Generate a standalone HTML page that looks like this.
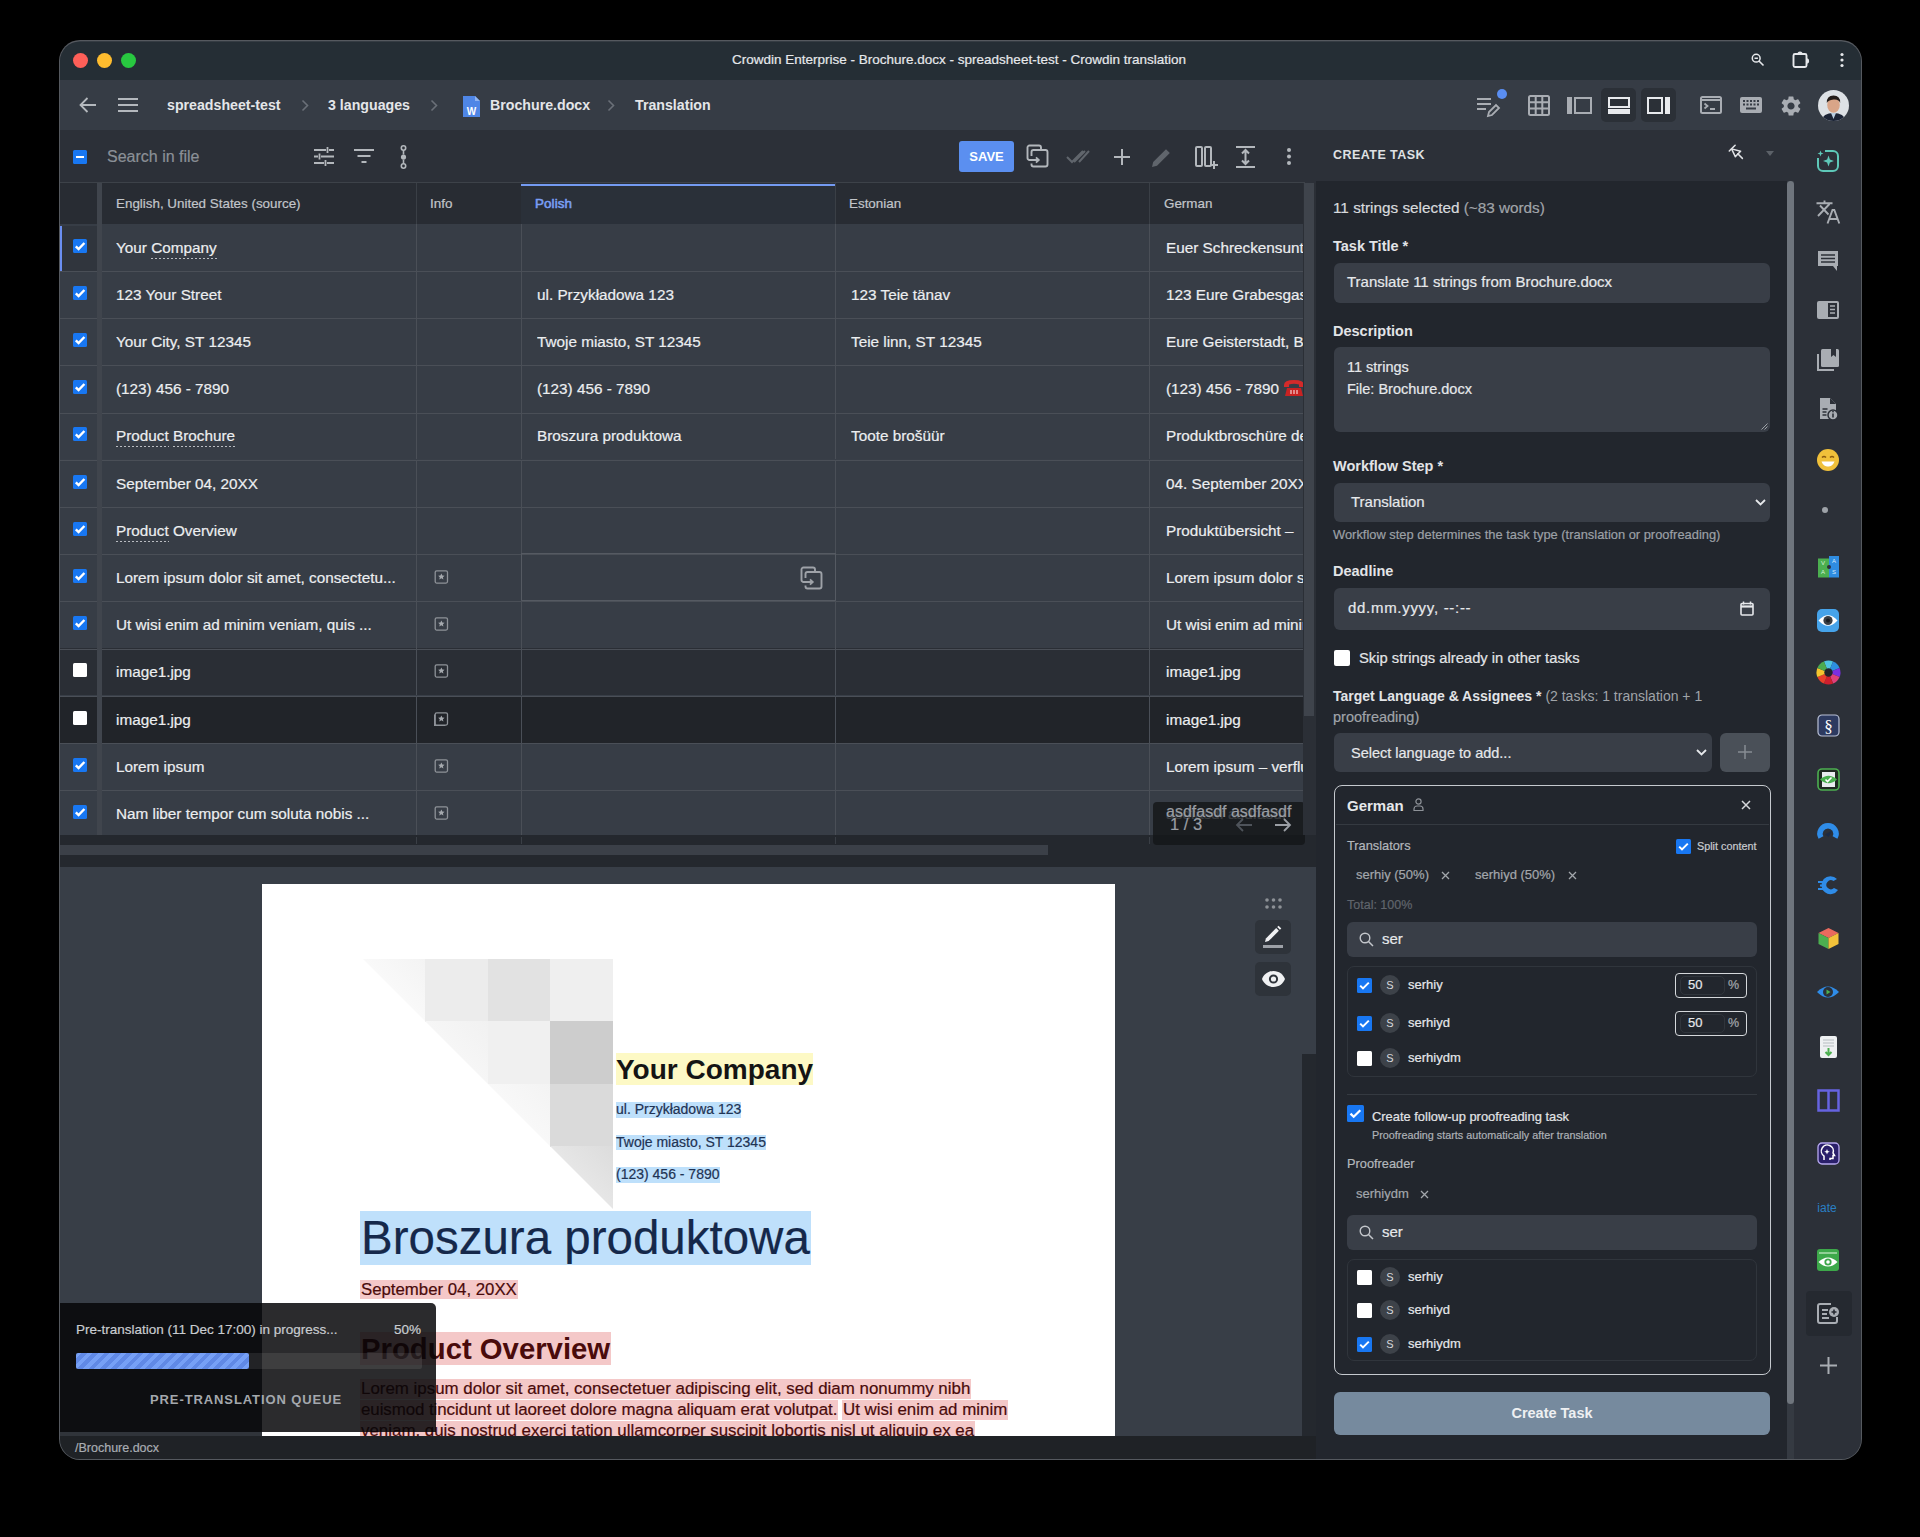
<!DOCTYPE html><html><head><meta charset="utf-8"><style>
*{box-sizing:border-box;margin:0;padding:0}
html,body{width:1920px;height:1537px;background:#000;overflow:hidden;font-family:"Liberation Sans",sans-serif}
.a{position:absolute}
.t{position:absolute;white-space:nowrap}
#frame{position:absolute;left:59px;top:40px;width:1803px;height:1420px;border-radius:21px;background:#55595f}
#win{position:absolute;left:0;top:0;width:1920px;height:1537px;clip-path:inset(41.5px 59px 78px 60px round 20px);background:#383e47}
.tl{position:absolute;width:15px;height:15px;border-radius:50%;top:53px}
.crumb{position:absolute;color:#e4e6e9;font-size:14.2px;font-weight:bold;top:96px;white-space:nowrap;line-height:18px}
.th{position:absolute;top:183px;height:41px;line-height:41px;font-size:13.4px;color:#c2c5ca;white-space:nowrap}
.row{position:absolute;left:60px;width:1245px;height:47.2px;background:#373d46}
.ln{position:absolute;left:0;bottom:-1px;width:1245px;height:1px;background:#4a4f57}
.cell{position:absolute;top:1px;height:46px;line-height:46px;font-size:15.3px;color:#eceef0;white-space:nowrap;overflow:hidden}
.vl{position:absolute;top:0;width:1px;height:47.2px;background:#4a4f57}
.cb{position:absolute;width:14px;height:14px;border-radius:1.5px;background:#1877f2}
.cb.off{background:#fff}
.cb svg{position:absolute;left:0;top:0}
.dash{background-image:linear-gradient(to right,#b9bcc1 55%,transparent 55%);background-size:4px 1px;background-repeat:repeat-x;background-position:0 100%;padding-bottom:3px}
.ico{position:absolute;overflow:visible}
.cell,.th,.t{-webkit-text-stroke:0.2px currentColor}
.t[style*="bold"]{-webkit-text-stroke:0}
</style></head><body>
<div id="frame"></div><div id="win">
<div class="a" style="left:60px;top:40px;width:1802px;height:40px;background:#252e35"></div>
<div class="tl" style="left:73px;background:#fe5f58"></div>
<div class="tl" style="left:97px;background:#febc2e"></div>
<div class="tl" style="left:121px;background:#28c840"></div>
<div class="t" style="left:732px;top:52px;color:#e6e8eb;font-size:13.5px;line-height:16px">Crowdin Enterprise - Brochure.docx - spreadsheet-test - Crowdin translation</div>
<svg class="ico" style="left:1751px;top:53px" width="14" height="14" viewBox="0 0 14 14"><circle cx="5.2" cy="5.2" r="3.9" fill="none" stroke="#e6e8eb" stroke-width="1.5"/><path d="M3.5 5.2h3.4M8 8l4.5 4.5" stroke="#e6e8eb" stroke-width="1.6"/></svg>
<svg class="ico" style="left:1791px;top:50px" width="20" height="20" viewBox="0 0 20 20"><rect x="2.5" y="4" width="13" height="13" rx="1.5" fill="none" stroke="#e6e8eb" stroke-width="1.9"/><path d="M6.4 4a2.6 2.6 0 0 1 5.2 0z" fill="#e6e8eb"/><path d="M15.5 8.3a2.6 2.6 0 0 1 0 5.2z" fill="#e6e8eb"/></svg>
<svg class="ico" style="left:1839px;top:52px" width="6" height="16" viewBox="0 0 6 16"><circle cx="3" cy="2.5" r="1.6" fill="#e6e8eb"/><circle cx="3" cy="8" r="1.6" fill="#e6e8eb"/><circle cx="3" cy="13.5" r="1.6" fill="#e6e8eb"/></svg>
<div class="a" style="left:60px;top:80px;width:1802px;height:50px;background:#363c45"></div>
<svg class="ico" style="left:78px;top:96px" width="19" height="18" viewBox="0 0 19 18"><path d="M18 9H3M9.5 2L2.5 9l7 7" fill="none" stroke="#b4b8bd" stroke-width="1.8"/></svg>
<svg class="ico" style="left:118px;top:98px" width="20" height="14" viewBox="0 0 20 14"><path d="M0 1h20M0 7h20M0 13h20" stroke="#b4b8bd" stroke-width="1.8"/></svg>
<div class="crumb" style="left:167px">spreadsheet-test</div>
<svg class="ico" style="left:301px;top:99px" width="9" height="13" viewBox="0 0 9 13"><path d="M1.5 1.5l5 5-5 5" fill="none" stroke="#6a7078" stroke-width="1.6"/></svg>
<div class="crumb" style="left:328px">3 languages</div>
<svg class="ico" style="left:430px;top:99px" width="9" height="13" viewBox="0 0 9 13"><path d="M1.5 1.5l5 5-5 5" fill="none" stroke="#6a7078" stroke-width="1.6"/></svg>
<svg class="ico" style="left:462px;top:95px" width="19" height="23" viewBox="0 0 19 23"><path d="M1 1h12l5 5v16H1z" fill="#4f86e6"/><path d="M13 1v5h5" fill="#8fb3f0"/><text x="9.5" y="20" font-family="Liberation Sans" font-weight="bold" font-size="10" fill="#fff" text-anchor="middle">W</text></svg>
<div class="crumb" style="left:490px">Brochure.docx</div>
<svg class="ico" style="left:607px;top:99px" width="9" height="13" viewBox="0 0 9 13"><path d="M1.5 1.5l5 5-5 5" fill="none" stroke="#6a7078" stroke-width="1.6"/></svg>
<div class="crumb" style="left:635px">Translation</div>
<svg class="ico" style="left:1476px;top:96px" width="26" height="22" viewBox="0 0 26 22"><path d="M1 3h14M1 8h14M1 13h9" stroke="#a9adb3" stroke-width="2"/><path d="M12 20l1-4 7-7 3 3-7 7z" fill="none" stroke="#a9adb3" stroke-width="1.8"/></svg>
<div class="a" style="left:1497px;top:89px;width:10px;height:10px;border-radius:50%;background:#5a8ef2"></div>
<svg class="ico" style="left:1528px;top:95px" width="22" height="21" viewBox="0 0 22 21"><rect x="1" y="1" width="20" height="19" rx="1.5" fill="none" stroke="#a9adb3" stroke-width="2"/><path d="M7.7 1v19M14.3 1v19M1 7.3h20M1 13.6h20" stroke="#a9adb3" stroke-width="2"/></svg>
<svg class="ico" style="left:1567px;top:97px" width="25" height="17" viewBox="0 0 25 17"><rect x="0" y="0" width="5" height="17" fill="#a9adb3"/><rect x="8" y="1" width="16" height="15" fill="none" stroke="#a9adb3" stroke-width="2"/></svg>
<div class="a" style="left:1601px;top:88px;width:35px;height:34px;border-radius:5px;background:#2b3037"></div>
<div class="a" style="left:1641px;top:88px;width:35px;height:34px;border-radius:5px;background:#2b3037"></div>
<svg class="ico" style="left:1608px;top:97px" width="22" height="17" viewBox="0 0 22 17"><rect x="1" y="1" width="20" height="9" fill="none" stroke="#e8eaed" stroke-width="2"/><rect x="0" y="12" width="22" height="5" fill="#e8eaed"/></svg>
<svg class="ico" style="left:1647px;top:97px" width="23" height="17" viewBox="0 0 23 17"><rect x="1" y="1" width="14" height="15" fill="none" stroke="#e8eaed" stroke-width="2"/><rect x="18" y="0" width="5" height="17" fill="#e8eaed"/></svg>
<svg class="ico" style="left:1700px;top:96px" width="22" height="18" viewBox="0 0 22 18"><rect x="1" y="1" width="20" height="16" rx="1.5" fill="none" stroke="#a9adb3" stroke-width="2"/><path d="M1 4h20" stroke="#a9adb3" stroke-width="2"/><path d="M4.5 7.5l3 2.5-3 2.5M10 13h5" fill="none" stroke="#a9adb3" stroke-width="1.8"/></svg>
<svg class="ico" style="left:1740px;top:97px" width="22" height="16" viewBox="0 0 22 16"><rect x="0" y="0" width="22" height="16" rx="2" fill="#a9adb3"/><g fill="#363c45"><rect x="3" y="3" width="2" height="2"/><rect x="6.5" y="3" width="2" height="2"/><rect x="10" y="3" width="2" height="2"/><rect x="13.5" y="3" width="2" height="2"/><rect x="17" y="3" width="2" height="2"/><rect x="3" y="6.5" width="2" height="2"/><rect x="6.5" y="6.5" width="2" height="2"/><rect x="10" y="6.5" width="2" height="2"/><rect x="13.5" y="6.5" width="2" height="2"/><rect x="17" y="6.5" width="2" height="2"/><rect x="6" y="10.5" width="10" height="2"/></g></svg>
<svg class="ico" style="left:1778.5px;top:93.5px" width="24" height="24" viewBox="0 0 24 24"><path fill="#a9adb3" d="M19.14 12.94c.04-.3.06-.61.06-.94 0-.32-.02-.64-.07-.94l2.03-1.58a.49.49 0 0 0 .12-.61l-1.92-3.32a.49.49 0 0 0-.59-.22l-2.39.96c-.5-.38-1.03-.7-1.62-.94l-.36-2.54a.48.48 0 0 0-.48-.41h-3.84c-.24 0-.43.17-.47.41l-.36 2.54c-.59.24-1.13.57-1.62.94l-2.39-.96a.48.48 0 0 0-.59.22L2.74 8.87c-.12.21-.08.47.12.61l2.03 1.58c-.05.3-.09.63-.09.94s.2.64.07.94l-2.03 1.58a.49.49 0 0 0-.12.61l1.92 3.32c.12.22.37.29.59.22l2.39-.96c.5.38 1.03.7 1.62.94l.36 2.54c.05.24.24.41.48.41h3.84c.24 0 .44-.17.47-.41l.36-2.54c.59-.24 1.13-.56 1.62-.94l2.39.96c.22.08.47 0 .59-.22l1.92-3.32c.12-.22.07-.47-.12-.61l-2.01-1.58zM12 15.6c-1.98 0-3.6-1.62-3.6-3.6s1.62-3.6 3.6-3.6 3.6 1.62 3.6 3.6-1.62 3.6-3.6 3.6z"/></svg>
<svg class="ico" style="left:1818px;top:90px" width="31" height="31" viewBox="0 0 31 31"><defs><clipPath id="avc"><circle cx="15.5" cy="15.5" r="15.5"/></clipPath></defs><g clip-path="url(#avc)"><rect width="31" height="31" fill="#dde1e5"/><path d="M3 31Q5 23 15.5 23T28 31z" fill="#1c2436"/><path d="M13 23l2.5 6 2.5-6z" fill="#b9cde0"/><ellipse cx="15.5" cy="15" rx="6.3" ry="7.8" fill="#d9a588"/><path d="M8.8 13Q8.5 5.5 15.5 5.5T22.2 13Q21 9 15.5 9.5T8.8 13z" fill="#231c19"/></g></svg>
<div class="a" style="left:60px;top:130px;width:1256px;height:53px;background:#2c3038"></div>
<div class="a" style="left:60px;top:182px;width:1245px;height:1px;background:#3d4249"></div>
<div class="cb" style="left:73px;top:150px;width:14px;height:14px"><div class="a" style="left:3px;top:6px;width:8px;height:2px;background:#fff"></div></div>
<div class="t" style="left:107px;top:147px;font-size:16px;line-height:19px;color:#8b9097">Search in file</div>
<svg class="ico" style="left:314px;top:147px" width="20" height="19" viewBox="0 0 20 19"><path d="M0 3h12M15 3h5M0 9.5h4M7 9.5h13M0 16h10M13 16h7M13.5 0v6M5.5 6.5v6M11.5 13v6" stroke="#b3b7bc" stroke-width="1.8"/></svg>
<svg class="ico" style="left:354px;top:149px" width="20" height="14" viewBox="0 0 20 14"><path d="M0 1h20M3.5 7h13M7.5 13h5" stroke="#b3b7bc" stroke-width="2"/></svg>
<svg class="ico" style="left:398px;top:145px" width="11" height="24" viewBox="0 0 11 24"><circle cx="5.5" cy="3" r="2.2" fill="none" stroke="#b3b7bc" stroke-width="1.6"/><circle cx="5.5" cy="12" r="2.6" fill="#b3b7bc"/><circle cx="5.5" cy="21" r="2.2" fill="none" stroke="#b3b7bc" stroke-width="1.6"/><path d="M5.5 5v4.5M5.5 14.5V19" stroke="#b3b7bc" stroke-width="1.6"/></svg>
<div class="a" style="left:959px;top:141px;width:55px;height:31px;border-radius:3px;background:#5b8ff0;color:#fff;font-size:13px;font-weight:bold;text-align:center;line-height:31px">SAVE</div>
<svg class="ico" style="left:1026px;top:144px" width="23" height="24" viewBox="0 0 23 24"><path d="M5 16H3.5A2 2 0 0 1 1.5 14V3.5A2 2 0 0 1 3.5 1.5H13A2 2 0 0 1 15 3.5V5.5" fill="none" stroke="#b3b7bc" stroke-width="1.9"/><path d="M5.5 12V8A2 2 0 0 1 7.5 6H19.5A2 2 0 0 1 21.5 8V20.5A2 2 0 0 1 19.5 22.5H7.5A2 2 0 0 1 5.5 20.5V19.5" fill="none" stroke="#b3b7bc" stroke-width="1.9"/><path d="M3 16h9.5M10 13.3l2.8 2.7-2.8 2.7" fill="none" stroke="#b3b7bc" stroke-width="1.8"/></svg>
<svg class="ico" style="left:1066px;top:150px" width="24" height="14" viewBox="0 0 24 14"><path d="M1 7l5 5L17 1M8 12L19 1M13 12l10-11" fill="none" stroke="#60656c" stroke-width="2"/></svg>
<svg class="ico" style="left:1114px;top:149px" width="16" height="16" viewBox="0 0 16 16"><path d="M8 0v16M0 8h16" stroke="#b3b7bc" stroke-width="2"/></svg>
<svg class="ico" style="left:1151px;top:147px" width="21" height="21" viewBox="0 0 21 21"><path d="M1 20l1.2-5L15 2.2l3.8 3.8L6 18.8z" fill="#60656c"/></svg>
<svg class="ico" style="left:1195px;top:146px" width="23" height="23" viewBox="0 0 23 23"><rect x="1" y="1" width="6" height="19" rx="1" fill="none" stroke="#b3b7bc" stroke-width="2"/><rect x="10" y="1" width="6" height="19" rx="1" fill="none" stroke="#b3b7bc" stroke-width="2"/><path d="M19 15v8M15 19h8" stroke="#b3b7bc" stroke-width="2"/></svg>
<svg class="ico" style="left:1236px;top:146px" width="19" height="22" viewBox="0 0 19 22"><path d="M0 1h19M0 21h19M9.5 4v14M6 7.5l3.5-3.5 3.5 3.5M6 14.5l3.5 3.5 3.5-3.5" fill="none" stroke="#b3b7bc" stroke-width="2"/></svg>
<svg class="ico" style="left:1286px;top:147px" width="6" height="19" viewBox="0 0 6 19"><circle cx="3" cy="3" r="2" fill="#b3b7bc"/><circle cx="3" cy="9.5" r="2" fill="#b3b7bc"/><circle cx="3" cy="16" r="2" fill="#b3b7bc"/></svg>
<div class="a" style="left:60px;top:183px;width:1245px;height:41px;background:#282c33"></div>
<div class="a" style="left:521px;top:183px;width:314px;height:41px;background:#2a3039"></div>
<div class="a" style="left:521px;top:183.5px;width:314px;height:2.5px;background:#749af1"></div>
<div class="a" style="left:97px;top:183px;width:5px;height:660px;background:#40454d"></div>
<div class="a" style="left:416px;top:183px;width:1px;height:41px;background:#3a3f46"></div>
<div class="a" style="left:835px;top:183px;width:1px;height:41px;background:#3a3f46"></div>
<div class="a" style="left:1149px;top:183px;width:1px;height:41px;background:#3a3f46"></div>
<div class="th" style="left:116px">English, United States (source)</div>
<div class="th" style="left:430px">Info</div>
<div class="th" style="left:535px;color:#7a9ff5;-webkit-text-stroke:0.55px #7a9ff5;letter-spacing:0.1px">Polish</div>
<div class="th" style="left:849px">Estonian</div>
<div class="th" style="left:1164px">German</div>
<div class="row" style="top:224px;background:#373d46">
<div class="a" style="left:2px;top:2px;width:35px;height:45px;background:#30353d"></div>
<div class="a" style="left:0;top:2px;width:2px;height:45px;background:#6b8ff2"></div>
<div class="cb" style="left:13px;top:15px"><svg width="14" height="14" viewBox="0 0 14 14"><path d="M2.8 7.3l2.8 2.8L11.4 4" fill="none" stroke="#fff" stroke-width="2.4"/></svg></div>
<div class="cell" style="left:56px;width:300px">Your <span class="dash">Company</span></div>
<div class="cell" style="left:477px;width:300px"></div>
<div class="cell" style="left:791px;width:300px"></div>
<div class="cell" style="left:1106px;width:138px">Euer Schreckensunternehmen</div>
<div class="vl" style="left:356px"></div>
<div class="vl" style="left:461px"></div>
<div class="vl" style="left:775px"></div>
<div class="vl" style="left:1089px"></div>
</div>
<div class="row" style="top:271px;background:#373d46">
<div class="cb" style="left:13px;top:15px"><svg width="14" height="14" viewBox="0 0 14 14"><path d="M2.8 7.3l2.8 2.8L11.4 4" fill="none" stroke="#fff" stroke-width="2.4"/></svg></div>
<div class="cell" style="left:56px;width:300px">123 Your Street</div>
<div class="cell" style="left:477px;width:300px">ul. Przykładowa 123</div>
<div class="cell" style="left:791px;width:300px">123 Teie tänav</div>
<div class="cell" style="left:1106px;width:138px">123 Eure Grabesgasse</div>
<div class="vl" style="left:356px"></div>
<div class="vl" style="left:461px"></div>
<div class="vl" style="left:775px"></div>
<div class="vl" style="left:1089px"></div>
</div>
<div class="row" style="top:318px;background:#373d46">
<div class="cb" style="left:13px;top:15px"><svg width="14" height="14" viewBox="0 0 14 14"><path d="M2.8 7.3l2.8 2.8L11.4 4" fill="none" stroke="#fff" stroke-width="2.4"/></svg></div>
<div class="cell" style="left:56px;width:300px">Your City, ST 12345</div>
<div class="cell" style="left:477px;width:300px">Twoje miasto, ST 12345</div>
<div class="cell" style="left:791px;width:300px">Teie linn, ST 12345</div>
<div class="cell" style="left:1106px;width:138px">Eure Geisterstadt, BU 66666</div>
<div class="vl" style="left:356px"></div>
<div class="vl" style="left:461px"></div>
<div class="vl" style="left:775px"></div>
<div class="vl" style="left:1089px"></div>
</div>
<div class="row" style="top:365px;background:#373d46">
<div class="cb" style="left:13px;top:15px"><svg width="14" height="14" viewBox="0 0 14 14"><path d="M2.8 7.3l2.8 2.8L11.4 4" fill="none" stroke="#fff" stroke-width="2.4"/></svg></div>
<div class="cell" style="left:56px;width:300px">(123) 456 - 7890</div>
<div class="cell" style="left:477px;width:300px">(123) 456 - 7890</div>
<div class="cell" style="left:791px;width:300px"></div>
<div class="cell" style="left:1106px;width:138px">(123) 456 - 7890 <svg width="22" height="19" viewBox="0 0 22 19" style="vertical-align:-3px"><path d="M1 7Q1 2 11 2T21 7L21 9 16 9 16 6.5Q11 5 6 6.5L6 9 1 9z" fill="#d42a2a"/><path d="M4 10h14l2 8H2z" fill="#c92222"/><path d="M8 12v4M11 12v4M14 12v4" stroke="#f6d0d0" stroke-width="1.2"/></svg></div>
<div class="vl" style="left:356px"></div>
<div class="vl" style="left:461px"></div>
<div class="vl" style="left:775px"></div>
<div class="vl" style="left:1089px"></div>
</div>
<div class="row" style="top:412px;background:#373d46">
<div class="cb" style="left:13px;top:15px"><svg width="14" height="14" viewBox="0 0 14 14"><path d="M2.8 7.3l2.8 2.8L11.4 4" fill="none" stroke="#fff" stroke-width="2.4"/></svg></div>
<div class="cell" style="left:56px;width:300px"><span class="dash">Product</span> <span class="dash">Brochure</span></div>
<div class="cell" style="left:477px;width:300px">Broszura produktowa</div>
<div class="cell" style="left:791px;width:300px">Toote brošüür</div>
<div class="cell" style="left:1106px;width:138px">Produktbroschüre des Grauens</div>
<div class="vl" style="left:356px"></div>
<div class="vl" style="left:461px"></div>
<div class="vl" style="left:775px"></div>
<div class="vl" style="left:1089px"></div>
</div>
<div class="row" style="top:460px;background:#373d46">
<div class="cb" style="left:13px;top:15px"><svg width="14" height="14" viewBox="0 0 14 14"><path d="M2.8 7.3l2.8 2.8L11.4 4" fill="none" stroke="#fff" stroke-width="2.4"/></svg></div>
<div class="cell" style="left:56px;width:300px">September 04, 20XX</div>
<div class="cell" style="left:477px;width:300px"></div>
<div class="cell" style="left:791px;width:300px"></div>
<div class="cell" style="left:1106px;width:138px">04. September 20XX</div>
<div class="vl" style="left:356px"></div>
<div class="vl" style="left:461px"></div>
<div class="vl" style="left:775px"></div>
<div class="vl" style="left:1089px"></div>
</div>
<div class="row" style="top:507px;background:#373d46">
<div class="cb" style="left:13px;top:15px"><svg width="14" height="14" viewBox="0 0 14 14"><path d="M2.8 7.3l2.8 2.8L11.4 4" fill="none" stroke="#fff" stroke-width="2.4"/></svg></div>
<div class="cell" style="left:56px;width:300px"><span class="dash">Product</span> Overview</div>
<div class="cell" style="left:477px;width:300px"></div>
<div class="cell" style="left:791px;width:300px"></div>
<div class="cell" style="left:1106px;width:138px">Produktübersicht –</div>
<div class="vl" style="left:356px"></div>
<div class="vl" style="left:461px"></div>
<div class="vl" style="left:775px"></div>
<div class="vl" style="left:1089px"></div>
</div>
<div class="row" style="top:554px;background:#373d46">
<div class="cb" style="left:13px;top:15px"><svg width="14" height="14" viewBox="0 0 14 14"><path d="M2.8 7.3l2.8 2.8L11.4 4" fill="none" stroke="#fff" stroke-width="2.4"/></svg></div>
<div class="cell" style="left:56px;width:300px">Lorem ipsum dolor sit amet, consectetu...</div>
<div class="cell" style="left:477px;width:300px"></div>
<div class="cell" style="left:791px;width:300px"></div>
<div class="cell" style="left:1106px;width:138px">Lorem ipsum dolor sit amet</div>
<div class="vl" style="left:356px"></div>
<div class="vl" style="left:461px"></div>
<div class="vl" style="left:775px"></div>
<div class="vl" style="left:1089px"></div>
</div>
<svg class="ico" style="left:434px;top:569.9px" width="14" height="14" viewBox="0 0 14 14"><rect x="1.2" y="0.8" width="12.3" height="12.3" rx="1.5" fill="none" stroke="#8e9298" stroke-width="1.3"/><path d="M7.35 3.4l1 2.1 2.2.25-1.65 1.5.5 2.2-2.05-1.15-2.05 1.15.5-2.2L4.15 5.75l2.2-.25z" fill="#a5a9ae"/></svg>
<div class="row" style="top:601px;background:#373d46">
<div class="cb" style="left:13px;top:15px"><svg width="14" height="14" viewBox="0 0 14 14"><path d="M2.8 7.3l2.8 2.8L11.4 4" fill="none" stroke="#fff" stroke-width="2.4"/></svg></div>
<div class="cell" style="left:56px;width:300px">Ut wisi enim ad minim veniam, quis ...</div>
<div class="cell" style="left:477px;width:300px"></div>
<div class="cell" style="left:791px;width:300px"></div>
<div class="cell" style="left:1106px;width:138px">Ut wisi enim ad minim veniam</div>
<div class="vl" style="left:356px"></div>
<div class="vl" style="left:461px"></div>
<div class="vl" style="left:775px"></div>
<div class="vl" style="left:1089px"></div>
</div>
<svg class="ico" style="left:434px;top:617.1px" width="14" height="14" viewBox="0 0 14 14"><rect x="1.2" y="0.8" width="12.3" height="12.3" rx="1.5" fill="none" stroke="#8e9298" stroke-width="1.3"/><path d="M7.35 3.4l1 2.1 2.2.25-1.65 1.5.5 2.2-2.05-1.15-2.05 1.15.5-2.2L4.15 5.75l2.2-.25z" fill="#a5a9ae"/></svg>
<div class="row" style="top:648px;background:#2a2e35">
<div class="cb off" style="left:13px;top:15px"></div>
<div class="cell" style="left:56px;width:300px">image1.jpg</div>
<div class="cell" style="left:477px;width:300px"></div>
<div class="cell" style="left:791px;width:300px"></div>
<div class="cell" style="left:1106px;width:138px">image1.jpg</div>
<div class="vl" style="left:356px"></div>
<div class="vl" style="left:461px"></div>
<div class="vl" style="left:775px"></div>
<div class="vl" style="left:1089px"></div>
</div>
<svg class="ico" style="left:434px;top:664.3px" width="14" height="14" viewBox="0 0 14 14"><rect x="1.2" y="0.8" width="12.3" height="12.3" rx="1.5" fill="none" stroke="#8e9298" stroke-width="1.3"/><path d="M7.35 3.4l1 2.1 2.2.25-1.65 1.5.5 2.2-2.05-1.15-2.05 1.15.5-2.2L4.15 5.75l2.2-.25z" fill="#a5a9ae"/></svg>
<div class="row" style="top:696px;background:#212429">
<div class="cb off" style="left:13px;top:15px"></div>
<div class="cell" style="left:56px;width:300px">image1.jpg</div>
<div class="cell" style="left:477px;width:300px"></div>
<div class="cell" style="left:791px;width:300px"></div>
<div class="cell" style="left:1106px;width:138px">image1.jpg</div>
<div class="vl" style="left:356px"></div>
<div class="vl" style="left:461px"></div>
<div class="vl" style="left:775px"></div>
<div class="vl" style="left:1089px"></div>
</div>
<svg class="ico" style="left:434px;top:711.5px" width="14" height="14" viewBox="0 0 14 14"><path d="M0.6 2.5v11h10.5" fill="none" stroke="#8e9298" stroke-width="1.2"/><rect x="1.2" y="0.8" width="12.3" height="12.3" rx="1.5" fill="none" stroke="#8e9298" stroke-width="1.3"/><path d="M7.35 3.4l1 2.1 2.2.25-1.65 1.5.5 2.2-2.05-1.15-2.05 1.15.5-2.2L4.15 5.75l2.2-.25z" fill="#a5a9ae"/></svg>
<div class="row" style="top:743px;background:#373d46">
<div class="cb" style="left:13px;top:15px"><svg width="14" height="14" viewBox="0 0 14 14"><path d="M2.8 7.3l2.8 2.8L11.4 4" fill="none" stroke="#fff" stroke-width="2.4"/></svg></div>
<div class="cell" style="left:56px;width:300px">Lorem ipsum</div>
<div class="cell" style="left:477px;width:300px"></div>
<div class="cell" style="left:791px;width:300px"></div>
<div class="cell" style="left:1106px;width:138px">Lorem ipsum – verflucht</div>
<div class="vl" style="left:356px"></div>
<div class="vl" style="left:461px"></div>
<div class="vl" style="left:775px"></div>
<div class="vl" style="left:1089px"></div>
</div>
<svg class="ico" style="left:434px;top:758.7px" width="14" height="14" viewBox="0 0 14 14"><rect x="1.2" y="0.8" width="12.3" height="12.3" rx="1.5" fill="none" stroke="#8e9298" stroke-width="1.3"/><path d="M7.35 3.4l1 2.1 2.2.25-1.65 1.5.5 2.2-2.05-1.15-2.05 1.15.5-2.2L4.15 5.75l2.2-.25z" fill="#a5a9ae"/></svg>
<div class="row" style="top:790px;background:#373d46">
<div class="cb" style="left:13px;top:15px"><svg width="14" height="14" viewBox="0 0 14 14"><path d="M2.8 7.3l2.8 2.8L11.4 4" fill="none" stroke="#fff" stroke-width="2.4"/></svg></div>
<div class="cell" style="left:56px;width:300px">Nam liber tempor cum soluta nobis ...</div>
<div class="cell" style="left:477px;width:300px"></div>
<div class="cell" style="left:791px;width:300px"></div>
<div class="cell" style="left:1106px;width:138px">asdfasdf asdfasdf</div>
<div class="vl" style="left:356px"></div>
<div class="vl" style="left:461px"></div>
<div class="vl" style="left:775px"></div>
<div class="vl" style="left:1089px"></div>
</div>
<svg class="ico" style="left:434px;top:805.9px" width="14" height="14" viewBox="0 0 14 14"><rect x="1.2" y="0.8" width="12.3" height="12.3" rx="1.5" fill="none" stroke="#8e9298" stroke-width="1.3"/><path d="M7.35 3.4l1 2.1 2.2.25-1.65 1.5.5 2.2-2.05-1.15-2.05 1.15.5-2.2L4.15 5.75l2.2-.25z" fill="#a5a9ae"/></svg>
<div class="a" style="left:60px;top:271.0px;width:1244px;height:1px;background:#4a4f57"></div>
<div class="a" style="left:60px;top:318.2px;width:1244px;height:1px;background:#4a4f57"></div>
<div class="a" style="left:60px;top:365.4px;width:1244px;height:1px;background:#4a4f57"></div>
<div class="a" style="left:60px;top:412.6px;width:1244px;height:1px;background:#4a4f57"></div>
<div class="a" style="left:60px;top:459.8px;width:1244px;height:1px;background:#4a4f57"></div>
<div class="a" style="left:60px;top:507.0px;width:1244px;height:1px;background:#4a4f57"></div>
<div class="a" style="left:60px;top:554.2px;width:1244px;height:1px;background:#4a4f57"></div>
<div class="a" style="left:60px;top:601.4px;width:1244px;height:1px;background:#4a4f57"></div>
<div class="a" style="left:60px;top:648.6px;width:1244px;height:1px;background:#4a4f57"></div>
<div class="a" style="left:60px;top:695.8px;width:1244px;height:1px;background:#4a4f57"></div>
<div class="a" style="left:60px;top:743.0px;width:1244px;height:1px;background:#4a4f57"></div>
<div class="a" style="left:60px;top:790.2px;width:1244px;height:1px;background:#4a4f57"></div>
<div class="a" style="left:60px;top:837.4px;width:1244px;height:1px;background:#4a4f57"></div>
<div class="a" style="left:97px;top:183px;width:5px;height:660px;background:#40454d"></div>
<div class="a" style="left:60px;top:835px;width:1256px;height:32px;background:#24282e"></div>
<div class="a" style="left:60px;top:845px;width:988px;height:10px;background:#3b4048"></div>
<div class="a" style="left:416px;top:837px;width:1px;height:7px;background:#3a3f46"></div>
<div class="a" style="left:521px;top:837px;width:1px;height:7px;background:#3a3f46"></div>
<div class="a" style="left:835px;top:837px;width:1px;height:7px;background:#3a3f46"></div>
<div class="a" style="left:1149px;top:837px;width:1px;height:7px;background:#3a3f46"></div>
<div class="a" style="left:60px;top:867px;width:1256px;height:570px;background:#383e47"></div>
<div class="a" style="left:1302px;top:1054px;width:14px;height:383px;background:#24282e"></div>
<div class="a" style="left:262px;top:884px;width:853px;height:552px;background:#fff;overflow:hidden">
<svg class="a" style="left:100.5px;top:74.5px" width="63" height="63" viewBox="0 0 63 63"><defs><linearGradient id="g362958" x1="0" y1="1" x2="1" y2="0"><stop offset="0.5" stop-color="#f9f9f9"/><stop offset="1" stop-color="#f3f3f3"/></linearGradient></defs><path d="M0 0H63V63z" fill="url(#g362958)"/></svg>
<div class="a" style="left:163.0px;top:74.5px;width:63px;height:63px;background:#ececec"></div>
<div class="a" style="left:225.5px;top:74.5px;width:63px;height:63px;background:#e2e2e2"></div>
<div class="a" style="left:288.0px;top:74.5px;width:63px;height:63px;background:#efefef"></div>
<svg class="a" style="left:163.0px;top:137.0px" width="63" height="63" viewBox="0 0 63 63"><defs><linearGradient id="g4251021" x1="0" y1="1" x2="1" y2="0"><stop offset="0.5" stop-color="#f6f6f6"/><stop offset="1" stop-color="#f1f1f1"/></linearGradient></defs><path d="M0 0H63V63z" fill="url(#g4251021)"/></svg>
<div class="a" style="left:225.5px;top:137.0px;width:63px;height:63px;background:#f0f0f0"></div>
<div class="a" style="left:288.0px;top:137.0px;width:63px;height:63px;background:#cdcdcd"></div>
<svg class="a" style="left:225.5px;top:199.5px" width="63" height="63" viewBox="0 0 63 63"><defs><linearGradient id="g4871083" x1="0" y1="1" x2="1" y2="0"><stop offset="0.5" stop-color="#f8f8f8"/><stop offset="1" stop-color="#f3f3f3"/></linearGradient></defs><path d="M0 0H63V63z" fill="url(#g4871083)"/></svg>
<div class="a" style="left:288.0px;top:199.5px;width:63px;height:63px;background:#dadada"></div>
<svg class="a" style="left:288.0px;top:262.0px" width="63" height="63" viewBox="0 0 63 63"><defs><linearGradient id="g5501146" x1="0" y1="1" x2="1" y2="0"><stop offset="0.5" stop-color="#e6e6e6"/><stop offset="1" stop-color="#dcdcdc"/></linearGradient></defs><path d="M0 0H63V63z" fill="url(#g5501146)"/></svg>
<div class="t" style="left:354px;top:168.5999999999999px;height:32.7px;line-height:33px;padding:0;background:#fdf9c5;color:#141414;font-size:28px;font-weight:bold">Your Company</div>
<div class="t" style="left:354px;top:218.29999999999995px;height:15.4px;line-height:15.5px;padding:0;background:#bee0fb;color:#1e3354;font-size:14px">ul. Przykładowa 123</div>
<div class="t" style="left:354px;top:250.5999999999999px;height:15.4px;line-height:15.5px;padding:0;background:#bee0fb;color:#1e3354;font-size:14px">Twoje miasto, ST 12345</div>
<div class="t" style="left:354px;top:283.20000000000005px;height:15.4px;line-height:15.5px;padding:0;background:#bee0fb;color:#1e3354;font-size:14px">(123) 456 - 7890</div>
<div class="t" style="left:98px;top:327px;height:54px;line-height:54px;padding:0 1px;background:#bfe0fb;color:#15284a;font-size:47.5px">Broszura produktowa</div>
<div class="t" style="left:98px;top:396px;height:19px;line-height:19px;padding:0 1px;background:#f4c8c8;color:#4a0b0b;font-size:16.8px">September 04, 20XX</div>
<div class="t" style="left:98px;top:448px;height:33px;line-height:33px;padding:0 1px;background:#f4c8c8;color:#4a0b0b;font-size:29.3px;font-weight:bold">Product Overview</div>
<div class="t" style="left:98px;top:495px;background:#f4c8c8;color:#4a0b0b;font-size:16.9px;height:20px;line-height:20px;padding:0 1px">Lorem ipsum dolor sit amet, consectetuer adipiscing elit, sed diam nonummy nibh</div>
<div class="t" style="left:98px;top:516px;background:#f4c8c8;color:#4a0b0b;font-size:16.9px;height:20px;line-height:20px;padding:0 1px;letter-spacing:-0.07px">euismod tincidunt ut laoreet dolore magna aliquam erat volutpat.</div>
<div class="t" style="left:580px;top:516px;background:#f4c8c8;color:#4a0b0b;font-size:16.9px;height:20px;line-height:20px;padding:0 1px">Ut wisi enim ad minim</div>
<div class="t" style="left:98px;top:537px;background:#f4c8c8;color:#4a0b0b;font-size:16.9px;height:20px;line-height:20px;padding:0 1px">veniam, quis nostrud exerci tation ullamcorper suscipit lobortis nisl ut aliquip ex ea</div>
</div>
<svg class="ico" style="left:1265px;top:898px" width="17" height="11" viewBox="0 0 17 11"><g fill="#8d9197"><circle cx="2" cy="2" r="1.8"/><circle cx="8.5" cy="2" r="1.8"/><circle cx="15" cy="2" r="1.8"/><circle cx="2" cy="9" r="1.8"/><circle cx="8.5" cy="9" r="1.8"/><circle cx="15" cy="9" r="1.8"/></g></svg>
<div class="a" style="left:1255px;top:920px;width:36px;height:34px;border-radius:5px;background:#2e333a"></div>
<div class="a" style="left:1255px;top:962px;width:36px;height:34px;border-radius:5px;background:#2e333a"></div>
<svg class="ico" style="left:1260px;top:924px" width="26" height="26" viewBox="0 0 26 26"><path d="M5 18l.9-3.6L16.2 4.1l2.7 2.7L8.6 17.1z" fill="#f0f1f3"/><path d="M17.2 3.1l1.4-1.4 2.7 2.7-1.4 1.4z" fill="#f0f1f3"/><rect x="3" y="21" width="20" height="3" fill="#9da1a7"/></svg>
<svg class="ico" style="left:1261px;top:970px" width="25" height="18" viewBox="0 0 25 18"><path d="M12.5 1C7 1 2.6 4.6 1 9c1.6 4.4 6 8 11.5 8S22.4 13.4 24 9C22.4 4.6 18 1 12.5 1z" fill="#f0f1f3"/><circle cx="12.5" cy="9" r="4.6" fill="#2e333a"/><circle cx="12.5" cy="9" r="2.6" fill="#f0f1f3"/></svg>
<div class="a" style="left:60px;top:1303px;width:376px;height:129px;border-radius:0 5px 0 0;background:rgba(6,6,8,0.85)"></div>
<div class="t" style="left:76px;top:1321.5px;font-size:13.5px;line-height:16px;color:#c9ccd0">Pre-translation (11 Dec 17:00) in progress...</div>
<div class="t" style="left:394px;top:1321.5px;font-size:13.5px;line-height:16px;color:#c9ccd0">50%</div>
<div class="a" style="left:76px;top:1353px;width:346px;height:16px;border-radius:2px;background:rgba(255,255,255,0.09)"></div>
<div class="a" style="left:76px;top:1353px;width:173px;height:16px;border-radius:2px;background:repeating-linear-gradient(135deg,#76a0f6 0 4px,#6089e6 4px 8px)"></div>
<div class="t" style="left:150px;top:1391px;font-size:13px;line-height:17px;font-weight:bold;letter-spacing:0.9px;color:#a4a8ad">PRE-TRANSLATION QUEUE</div>
<div class="a" style="left:60px;top:1432px;width:202px;height:4px;background:#30343a"></div><div class="a" style="left:60px;top:1436px;width:1256px;height:25px;background:#1f2226"></div>
<div class="t" style="left:75px;top:1441px;font-size:12.5px;line-height:15px;color:#a9adb3">/Brochure.docx</div>
<div class="a" style="left:1153px;top:802px;width:152px;height:43px;border-radius:4px;background:rgba(20,22,25,0.82)"></div>
<div class="t" style="left:1166px;top:803px;font-size:16px;line-height:18px;color:#9a9ea4">asdfasdf asdfasdf</div>
<div class="t" style="left:1170px;top:815px;font-size:16.5px;line-height:19px;color:#9a9ea4">1 / 3</div>
<svg class="ico" style="left:1235px;top:817px" width="18" height="16" viewBox="0 0 18 16"><path d="M17 8H2M8 2L2 8l6 6" fill="none" stroke="#4e535a" stroke-width="1.8"/></svg>
<svg class="ico" style="left:1274px;top:817px" width="18" height="16" viewBox="0 0 18 16"><path d="M1 8h15M10 2l6 6-6 6" fill="none" stroke="#9a9ea4" stroke-width="1.8"/></svg>
<div class="a" style="left:1303px;top:183px;width:13px;height:652px;background:#2b2f36"></div>
<div class="a" style="left:1304px;top:183px;width:10px;height:533px;background:#3f444c"></div>
<div class="a" style="left:1316px;top:130px;width:479px;height:51px;background:#2c3038"></div>
<div class="a" style="left:1316px;top:181px;width:479px;height:1280px;background:#22262d"></div>
<div class="t" style="left:1333px;top:147px;font-size:12.5px;line-height:16px;font-weight:bold;letter-spacing:0.45px;color:#dfe1e4">CREATE TASK</div>
<svg class="ico" style="left:1728px;top:144px" width="16" height="16" viewBox="0 0 16 16"><path d="M1.3 7L7.1 1.3" stroke="#e0e2e5" stroke-width="1.6" stroke-linecap="round"/><path d="M3.6 4.9L12.6 7.3L7.3 12.6z" fill="none" stroke="#e0e2e5" stroke-width="1.5" stroke-linejoin="round"/><path d="M9.8 9.8l4.6 4.6" stroke="#e0e2e5" stroke-width="1.5" stroke-linecap="round"/></svg>
<svg class="ico" style="left:1766px;top:151px" width="8" height="5" viewBox="0 0 8 5"><path d="M0 0h8L4 5z" fill="#5c6168"/></svg>
<div class="a" style="left:1787px;top:181px;width:7px;height:1280px;background:#353a42"></div>
<div class="a" style="left:1787px;top:181px;width:7px;height:1223px;border-radius:4px;background:#6f757d"></div>
<div class="a" style="left:1794px;top:130px;width:68px;height:1331px;background:#2c3038"></div>
<div class="t" style="left:1333px;top:199px;font-size:15.3px;line-height:18px;color:#d8dadd">11 strings selected <span style="color:#a0a4a9">(~83 words)</span></div>
<div class="t" style="left:1333px;top:237px;font-size:14.5px;line-height:18px;font-weight:bold;color:#e2e4e7">Task Title *</div>
<div class="a" style="left:1334px;top:263px;width:436px;height:40px;border-radius:6px;background:#393e47"></div>
<div class="t" style="left:1347px;top:273px;font-size:15px;line-height:18px;color:#e6e8eb">Translate 11 strings from Brochure.docx</div>
<div class="t" style="left:1333px;top:322px;font-size:14.5px;line-height:18px;font-weight:bold;color:#e2e4e7">Description</div>
<div class="a" style="left:1334px;top:347px;width:436px;height:85px;border-radius:6px;background:#393e47"></div>
<div class="t" style="left:1347px;top:358px;font-size:14.5px;line-height:18px;color:#e6e8eb">11 strings</div>
<div class="t" style="left:1347px;top:380px;font-size:14.5px;line-height:18px;color:#e6e8eb">File: Brochure.docx</div>
<svg class="ico" style="left:1761px;top:423px" width="7" height="7" viewBox="0 0 7 7"><path d="M6.5 0.5L0.5 6.5M6.5 3.5l-3 3" stroke="#9ea2a8" stroke-width="1"/></svg>
<div class="t" style="left:1333px;top:457px;font-size:14.5px;line-height:18px;font-weight:bold;color:#e2e4e7">Workflow Step *</div>
<div class="a" style="left:1334px;top:483px;width:436px;height:39px;border-radius:6px;background:#393e47"></div>
<div class="t" style="left:1351px;top:493px;font-size:15px;line-height:18px;color:#e6e8eb">Translation</div>
<svg class="ico" style="left:1755px;top:499px" width="11" height="7" viewBox="0 0 11 7"><path d="M1 1l4.5 4.5L10 1" fill="none" stroke="#e6e8eb" stroke-width="1.8"/></svg>
<div class="t" style="left:1333px;top:527px;font-size:12.9px;line-height:15px;color:#9ca0a6">Workflow step determines the task type (translation or proofreading)</div>
<div class="t" style="left:1333px;top:562px;font-size:14.5px;line-height:18px;font-weight:bold;color:#e2e4e7">Deadline</div>
<div class="a" style="left:1334px;top:588px;width:436px;height:42px;border-radius:6px;background:#393e47"></div>
<div class="t" style="left:1348px;top:599px;font-size:15px;letter-spacing:0.7px;line-height:18px;color:#e6e8eb">dd.mm.yyyy, --:--</div>
<svg class="ico" style="left:1740px;top:601px" width="14" height="15" viewBox="0 0 14 15"><rect x="1" y="2.5" width="12" height="11.5" rx="1" fill="none" stroke="#e6e8eb" stroke-width="1.6"/><path d="M1 5.5h12" stroke="#e6e8eb" stroke-width="2.2"/><path d="M3.5 0.5v3M10.5 0.5v3" stroke="#e6e8eb" stroke-width="1.5"/></svg>
<div class="a" style="left:1334px;top:650px;width:16px;height:16px;border-radius:2px;background:#fff"></div>
<div class="t" style="left:1359px;top:649px;font-size:14.75px;line-height:18px;color:#e2e4e7">Skip strings already in other tasks</div>
<div class="t" style="left:1333px;top:687px;font-size:14px;line-height:18px;font-weight:bold;color:#e2e4e7">Target Language &amp; Assignees * <span style="font-weight:normal;color:#a0a4a9">(2 tasks: 1 translation + 1</span></div>
<div class="t" style="left:1333px;top:708px;font-size:14.5px;line-height:18px;color:#a0a4a9">proofreading)</div>
<div class="a" style="left:1334px;top:733px;width:378px;height:39px;border-radius:6px;background:#393e47"></div>
<div class="t" style="left:1351px;top:744px;font-size:14.5px;line-height:18px;color:#e6e8eb">Select language to add...</div>
<svg class="ico" style="left:1696px;top:749px" width="11" height="7" viewBox="0 0 11 7"><path d="M1 1l4.5 4.5L10 1" fill="none" stroke="#e6e8eb" stroke-width="1.8"/></svg>
<div class="a" style="left:1720px;top:733px;width:50px;height:39px;border-radius:6px;background:#4a5058"></div>
<svg class="ico" style="left:1738px;top:745px" width="14" height="14" viewBox="0 0 14 14"><path d="M7 0v14M0 7h14" stroke="#878c93" stroke-width="1.5"/></svg>
<div class="a" style="left:1334px;top:785px;width:437px;height:590px;border-radius:8px;border:1.5px solid #c5c9ce;background:#22262d"></div>
<div class="t" style="left:1347px;top:797px;font-size:15px;line-height:18px;font-weight:bold;color:#e6e8eb">German</div>
<svg class="ico" style="left:1413px;top:798px" width="11" height="13" viewBox="0 0 11 13"><circle cx="5.5" cy="3.5" r="2.6" fill="none" stroke="#8e9298" stroke-width="1.2"/><path d="M1 12.5v-1.5a3 3 0 0 1 3-3h3a3 3 0 0 1 3 3v1.5z" fill="none" stroke="#8e9298" stroke-width="1.2"/></svg>
<svg class="ico" style="left:1741px;top:800px" width="10" height="10" viewBox="0 0 10 10"><path d="M1 1l8 8M9 1l-8 8" stroke="#d6d8db" stroke-width="1.5"/></svg>
<div class="a" style="left:1336px;top:824px;width:433px;height:1px;background:#353a41"></div>
<div class="t" style="left:1347px;top:838px;font-size:12.8px;line-height:16px;color:#b3b7bc">Translators</div>
<div class="cb" style="left:1676px;top:839px;width:15px;height:15px"><svg width="15" height="15" viewBox="0 0 15 15"><path d="M3.2 7.6l2.8 2.8 5.8-5.8" fill="none" stroke="#fff" stroke-width="2"/></svg></div>
<div class="t" style="left:1697px;top:840px;font-size:10.8px;line-height:13px;color:#c9ccd0">Split content</div>
<div class="t" style="left:1356px;top:867px;font-size:13px;line-height:16px;color:#a3a7ac">serhiy (50%)</div>
<svg class="ico" style="left:1441px;top:871px" width="9" height="9" viewBox="0 0 9 9"><path d="M1 1l7 7M8 1l-7 7" stroke="#a3a7ac" stroke-width="1.3"/></svg>
<div class="t" style="left:1475px;top:867px;font-size:13px;line-height:16px;color:#a3a7ac">serhiyd (50%)</div>
<svg class="ico" style="left:1568px;top:871px" width="9" height="9" viewBox="0 0 9 9"><path d="M1 1l7 7M8 1l-7 7" stroke="#a3a7ac" stroke-width="1.3"/></svg>
<div class="t" style="left:1347px;top:897px;font-size:12.5px;line-height:16px;color:#60656c">Total: 100%</div>
<div class="a" style="left:1347px;top:922px;width:410px;height:35px;border-radius:6px;background:#393e47"></div>
<svg class="ico" style="left:1359px;top:932px" width="15" height="15" viewBox="0 0 15 15"><circle cx="6" cy="6" r="4.8" fill="none" stroke="#c3c6cb" stroke-width="1.4"/><path d="M9.5 9.5l4.5 4.5" stroke="#c3c6cb" stroke-width="1.5"/></svg>
<div class="t" style="left:1382px;top:930px;font-size:15px;line-height:18px;color:#e6e8eb">ser</div>
<div class="a" style="left:1347px;top:966px;width:410px;height:111px;border-radius:7px;border:1px solid #30353c"></div>
<div class="cb" style="left:1357px;top:978px;width:15px;height:15px"><svg width="15" height="15" viewBox="0 0 15 15"><path d="M3.2 7.6l2.8 2.8 5.8-5.8" fill="none" stroke="#fff" stroke-width="2"/></svg></div>
<div class="a" style="left:1380px;top:975px;width:20px;height:20px;border-radius:50%;background:#3d4249;color:#d5d8db;font-size:11px;line-height:20px;text-align:center">S</div>
<div class="t" style="left:1408px;top:977px;font-size:13px;line-height:16px;color:#e6e8eb">serhiy</div>
<div class="a" style="left:1675px;top:973px;width:72px;height:25px;border-radius:4px;border:1.5px solid #d5d8db"></div>
<div class="a" style="left:1680px;top:976px;width:45px;height:19px;border-radius:5px;border:1px solid #30353c"></div>
<div class="t" style="left:1688px;top:977px;font-size:13px;line-height:16px;color:#e6e8eb">50</div>
<div class="t" style="left:1728px;top:977px;font-size:12.5px;line-height:16px;color:#a3a7ac">%</div>
<div class="cb" style="left:1357px;top:1016px;width:15px;height:15px"><svg width="15" height="15" viewBox="0 0 15 15"><path d="M3.2 7.6l2.8 2.8 5.8-5.8" fill="none" stroke="#fff" stroke-width="2"/></svg></div>
<div class="a" style="left:1380px;top:1013px;width:20px;height:20px;border-radius:50%;background:#3d4249;color:#d5d8db;font-size:11px;line-height:20px;text-align:center">S</div>
<div class="t" style="left:1408px;top:1015px;font-size:13px;line-height:16px;color:#e6e8eb">serhiyd</div>
<div class="a" style="left:1675px;top:1011px;width:72px;height:25px;border-radius:4px;border:1.5px solid #d5d8db"></div>
<div class="a" style="left:1680px;top:1014px;width:45px;height:19px;border-radius:5px;border:1px solid #30353c"></div>
<div class="t" style="left:1688px;top:1015px;font-size:13px;line-height:16px;color:#e6e8eb">50</div>
<div class="t" style="left:1728px;top:1015px;font-size:12.5px;line-height:16px;color:#a3a7ac">%</div>
<div class="cb off" style="left:1357px;top:1051px;width:15px;height:15px"></div>
<div class="a" style="left:1380px;top:1048px;width:20px;height:20px;border-radius:50%;background:#3d4249;color:#d5d8db;font-size:11px;line-height:20px;text-align:center">S</div>
<div class="t" style="left:1408px;top:1050px;font-size:13px;line-height:16px;color:#e6e8eb">serhiydm</div>
<div class="a" style="left:1347px;top:1094px;width:410px;height:1px;background:#353a41"></div>
<div class="cb" style="left:1347px;top:1105px;width:17px;height:17px"><svg width="17" height="17" viewBox="0 0 17 17"><path d="M3.5 8.6l3.2 3.2 6.6-6.6" fill="none" stroke="#fff" stroke-width="2.2"/></svg></div>
<div class="t" style="left:1372px;top:1109px;font-size:12.9px;line-height:16px;color:#e2e4e7">Create follow-up proofreading task</div>
<div class="t" style="left:1372px;top:1129px;font-size:10.8px;line-height:13px;color:#aeb2b7">Proofreading starts automatically after translation</div>
<div class="t" style="left:1347px;top:1156px;font-size:12.8px;line-height:16px;color:#b3b7bc">Proofreader</div>
<div class="t" style="left:1356px;top:1186px;font-size:13px;line-height:16px;color:#a3a7ac">serhiydm</div>
<svg class="ico" style="left:1420px;top:1190px" width="9" height="9" viewBox="0 0 9 9"><path d="M1 1l7 7M8 1l-7 7" stroke="#a3a7ac" stroke-width="1.3"/></svg>
<div class="a" style="left:1347px;top:1215px;width:410px;height:35px;border-radius:6px;background:#393e47"></div>
<svg class="ico" style="left:1359px;top:1225px" width="15" height="15" viewBox="0 0 15 15"><circle cx="6" cy="6" r="4.8" fill="none" stroke="#c3c6cb" stroke-width="1.4"/><path d="M9.5 9.5l4.5 4.5" stroke="#c3c6cb" stroke-width="1.5"/></svg>
<div class="t" style="left:1382px;top:1223px;font-size:15px;line-height:18px;color:#e6e8eb">ser</div>
<div class="a" style="left:1347px;top:1259px;width:410px;height:102px;border-radius:7px;border:1px solid #30353c"></div>
<div class="cb off" style="left:1357px;top:1270px;width:15px;height:15px"></div>
<div class="a" style="left:1380px;top:1267px;width:20px;height:20px;border-radius:50%;background:#3d4249;color:#d5d8db;font-size:11px;line-height:20px;text-align:center">S</div>
<div class="t" style="left:1408px;top:1269px;font-size:13px;line-height:16px;color:#e6e8eb">serhiy</div>
<div class="cb off" style="left:1357px;top:1303px;width:15px;height:15px"></div>
<div class="a" style="left:1380px;top:1300px;width:20px;height:20px;border-radius:50%;background:#3d4249;color:#d5d8db;font-size:11px;line-height:20px;text-align:center">S</div>
<div class="t" style="left:1408px;top:1302px;font-size:13px;line-height:16px;color:#e6e8eb">serhiyd</div>
<div class="cb" style="left:1357px;top:1337px;width:15px;height:15px"><svg width="15" height="15" viewBox="0 0 15 15"><path d="M3.2 7.6l2.8 2.8 5.8-5.8" fill="none" stroke="#fff" stroke-width="2"/></svg></div>
<div class="a" style="left:1380px;top:1334px;width:20px;height:20px;border-radius:50%;background:#3d4249;color:#d5d8db;font-size:11px;line-height:20px;text-align:center">S</div>
<div class="t" style="left:1408px;top:1336px;font-size:13px;line-height:16px;color:#e6e8eb">serhiydm</div>
<div class="a" style="left:1334px;top:1392px;width:436px;height:43px;border-radius:6px;background:#768a9e;color:#eef0f2;font-size:14.5px;font-weight:bold;line-height:43px;text-align:center">Create Task</div>
<svg class="ico" style="left:1816.0px;top:149.0px" width="24" height="24" viewBox="0 0 24 24"><rect x="2" y="2" width="20" height="20" rx="5" fill="none" stroke="#5ec8b8" stroke-width="2"/><rect x="0" y="0" width="9" height="9" fill="#2c3038"/><path d="M12.5 6.5l1.4 4.1 4.1 1.4-4.1 1.4-1.4 4.1-1.4-4.1L7 12l4.1-1.4z" fill="#5ec8b8"/><path d="M4.5 1.5l.8 2.2 2.2.8-2.2.8-.8 2.2-.8-2.2-2.2-.8 2.2-.8z" fill="#5ec8b8"/></svg>
<svg class="ico" style="left:1816.0px;top:200.0px" width="24" height="24" viewBox="0 0 24 24"><path d="M0.5 3.2h16M8.5 0.5v2.7M2 16L13.5 4M4 5.5l8.5 9" fill="none" stroke="#a9adb3" stroke-width="1.9"/><path d="M11.5 23.5l5-13.5h1.8l5 13.5M13.3 19h8.2" fill="none" stroke="#a9adb3" stroke-width="1.9"/></svg>
<svg class="ico" style="left:1816.0px;top:249.0px" width="24" height="24" viewBox="0 0 24 24"><path d="M2 2h20v15h-1v5l-4-5H2z" fill="#a9adb3"/><path d="M5 6h14M5 9.5h14M5 13h14" stroke="#2c3038" stroke-width="1.6"/></svg>
<svg class="ico" style="left:1816.0px;top:298.0px" width="24" height="24" viewBox="0 0 24 24"><rect x="1" y="3" width="22" height="18" rx="2" fill="#a9adb3"/><rect x="12" y="5" width="9" height="14" fill="#2c3038"/><path d="M14 8h5M14 11.5h5M14 15h5" stroke="#a9adb3" stroke-width="1.5"/></svg>
<svg class="ico" style="left:1816.0px;top:348.0px" width="24" height="24" viewBox="0 0 24 24"><path d="M2 6v16h16" fill="none" stroke="#a9adb3" stroke-width="2"/><rect x="5" y="1" width="18" height="18" rx="1.5" fill="#a9adb3"/><path d="M15 1v8l2.5-2 2.5 2V1z" fill="#2c3038"/></svg>
<svg class="ico" style="left:1816.0px;top:397.0px" width="24" height="24" viewBox="0 0 24 24"><path d="M4 1h10l6 6v15H4z" fill="#a9adb3"/><path d="M14 1v6h6" fill="#2c3038"/><path d="M6.5 12h5M6.5 15h4M6.5 18h4" stroke="#2c3038" stroke-width="1.5"/><circle cx="17" cy="18" r="5" fill="#a9adb3" stroke="#2c3038" stroke-width="1.5"/><path d="M17 16.5v4" stroke="#2c3038" stroke-width="1.6"/><circle cx="17" cy="14.6" r="0.9" fill="#2c3038"/></svg>
<svg class="ico" style="left:1816.0px;top:448.0px" width="24" height="24" viewBox="0 0 24 24"><circle cx="12" cy="12" r="11" fill="#f0c03a"/><path d="M5.5 13.5c1.5 4 4 5 6.5 5s5-1 6.5-5z" fill="#fff"/><path d="M6 9.5q2-2 4 0M14 9.5q2-2 4 0" fill="none" stroke="#8a5a10" stroke-width="1.5"/></svg>
<svg class="ico" style="left:1822.0px;top:507.0px" width="6" height="6" viewBox="0 0 6 6"><circle cx="3" cy="3" r="3" fill="#9ea2a8"/></svg>
<svg class="ico" style="left:1817.5px;top:556.0px" width="21" height="22" viewBox="0 0 21 22"><rect x="0" y="2.5" width="11" height="19" fill="#4caf50"/><rect x="11" y="0" width="10" height="11" fill="#2f8ce0"/><rect x="11" y="11" width="10" height="10.5" fill="#2f8ce0"/><circle cx="11" cy="11" r="2" fill="#2c3038"/><text x="5" y="9" font-size="6" fill="#d7f0d8" text-anchor="middle" font-family="Liberation Sans">V</text><text x="5" y="18" font-size="6" fill="#d7f0d8" text-anchor="middle" font-family="Liberation Sans">A</text><text x="16" y="7" font-size="6" fill="#d9ebfb" text-anchor="middle" font-family="Liberation Sans">A</text><text x="16" y="18" font-size="6" fill="#d9ebfb" text-anchor="middle" font-family="Liberation Sans">S</text></svg>
<svg class="ico" style="left:1817.0px;top:608.5px" width="22" height="23" viewBox="0 0 22 23"><rect x="0" y="0" width="22" height="23" rx="5" fill="#46a3ea"/><path d="M1.5 11.5Q11 1 20.5 11.5Q11 22 1.5 11.5z" fill="#fff"/><circle cx="11" cy="11.5" r="4.6" fill="#3a3f46"/><circle cx="11" cy="11.5" r="2" fill="#1b1e22"/></svg>
<svg class="ico" style="left:1815.5px;top:659.5px" width="25" height="25" viewBox="0 0 25 25"><path d="M12.5 12.5L7.91 1.41A12 12 0 0 1 17.09 1.41z" fill="#4ec3e0"/><path d="M12.5 12.5L17.09 1.41A12 12 0 0 1 23.59 7.91z" fill="#2d8fe0"/><path d="M12.5 12.5L23.59 7.91A12 12 0 0 1 23.59 17.09z" fill="#7b2fe0"/><path d="M12.5 12.5L23.59 17.09A12 12 0 0 1 17.09 23.59z" fill="#e0407a"/><path d="M12.5 12.5L17.09 23.59A12 12 0 0 1 7.91 23.59z" fill="#d01e2e"/><path d="M12.5 12.5L7.91 23.59A12 12 0 0 1 1.41 17.09z" fill="#e8402a"/><path d="M12.5 12.5L1.41 17.09A12 12 0 0 1 1.41 7.91z" fill="#f5c52e"/><path d="M12.5 12.5L1.41 7.91A12 12 0 0 1 7.91 1.41z" fill="#4caa4e"/><circle cx="12.5" cy="12.5" r="4.2" fill="#22252a"/></svg>
<svg class="ico" style="left:1816.5px;top:713.5px" width="23" height="23" viewBox="0 0 23 23"><rect x="1" y="1" width="21" height="21" rx="4" fill="#2d3a60" stroke="#b9c0d6" stroke-width="1.2"/><text x="11.5" y="18" font-size="17" fill="#fff" text-anchor="middle" font-family="Liberation Serif">§</text></svg>
<svg class="ico" style="left:1816.5px;top:767.5px" width="23" height="23" viewBox="0 0 23 23"><rect x="1" y="1" width="21" height="21" rx="4" fill="#1f2a22" stroke="#4caf50" stroke-width="1.6"/><rect x="5" y="4" width="13" height="15" fill="#e8ecef"/><path d="M3 11.5Q11.5 4 20 11.5Q11.5 19 3 11.5z" fill="#49b04f"/><path d="M8.5 11.5l2 2 4-4" fill="none" stroke="#fff" stroke-width="1.6"/></svg>
<svg class="ico" style="left:1816.0px;top:820.0px" width="24" height="22" viewBox="0 0 24 22"><path d="M5 17.5A8 8 0 1 1 19 17.5" fill="none" stroke="#2f8ce8" stroke-width="5.5"/><path d="M9 14.5l7.5-4-4 6.5z" fill="#1c2a44"/></svg>
<svg class="ico" style="left:1816.5px;top:873.0px" width="23" height="24" viewBox="0 0 23 24"><path d="M20 6A9 9 0 1 0 21 17l-4-2A4.5 4.5 0 1 1 16.5 8z" fill="#2f8ce8"/><path d="M1 9h5M3 12.5h4M1 16h5" stroke="#2f8ce8" stroke-width="2"/></svg>
<svg class="ico" style="left:1816.5px;top:926.5px" width="23" height="23" viewBox="0 0 23 23"><path d="M11.5 1l10 5-10 5-10-5z" fill="#e96a5e"/><path d="M1.5 6l10 5v11l-10-5z" fill="#4caf50"/><path d="M21.5 6l-10 5v11l10-5z" fill="#f3c23a"/></svg>
<svg class="ico" style="left:1816.0px;top:981.0px" width="24" height="22" viewBox="0 0 24 22"><path d="M1 11Q12 0 23 11Q12 22 1 11z" fill="#2f8ce8"/><circle cx="12" cy="11" r="5" fill="#2c3038"/><path d="M10.5 8.5v5l4-2.5z" fill="#4caf50"/></svg>
<svg class="ico" style="left:1817.5px;top:1035.0px" width="21" height="24" viewBox="0 0 21 24"><rect x="2" y="1" width="17" height="22" rx="2" fill="#eef0f2"/><path d="M5 5h11M5 8h11M5 11h11" stroke="#b6bbc0" stroke-width="1.2"/><path d="M10.5 13v7M7.5 17l3 3 3-3" fill="none" stroke="#4caf50" stroke-width="2"/></svg>
<svg class="ico" style="left:1816.5px;top:1088.5px" width="23" height="23" viewBox="0 0 23 23"><rect x="1.5" y="1.5" width="20" height="20" fill="none" stroke="#6663e0" stroke-width="2.5"/><path d="M11.5 1.5v20" stroke="#6663e0" stroke-width="2.5"/></svg>
<svg class="ico" style="left:1816.5px;top:1141.5px" width="23" height="23" viewBox="0 0 23 23"><rect x="1" y="1" width="21" height="21" rx="4" fill="#2a1f6a" stroke="#b7a9f0" stroke-width="1.3"/><path d="M7 18v-4a6 6 0 1 1 9 -3l1.5 2.5h-1.5v3h-3v1.5" fill="none" stroke="#fff" stroke-width="1.5"/><path d="M10 7l.8 2 2 .8-2 .8-.8 2-.8-2-2-.8 2-.8z" fill="#fff"/></svg>
<svg class="ico" style="left:1815.0px;top:1199.0px" width="26" height="16" viewBox="0 0 26 16"><text x="12" y="13" font-size="12" fill="#2a7fc4" text-anchor="middle" font-family="Liberation Sans">iate</text></svg>
<svg class="ico" style="left:1816.0px;top:1248.0px" width="24" height="24" viewBox="0 0 24 24"><rect x="1" y="1" width="22" height="22" rx="3" fill="#3da84a"/><path d="M3 5h18" stroke="#c9ecc9" stroke-width="1.2"/><path d="M2.5 14Q12 5 21.5 14Q12 23 2.5 14z" fill="#fff"/><circle cx="12" cy="14" r="3.6" fill="#3da84a"/><circle cx="12" cy="14" r="1.8" fill="#fff"/></svg>
<div class="a" style="left:1806px;top:1291px;width:46px;height:45px;border-radius:4px;background:#252930"></div>
<svg class="ico" style="left:1816.5px;top:1301.5px" width="23" height="23" viewBox="0 0 23 23"><path d="M14 2H3a2 2 0 0 0-2 2v15a2 2 0 0 0 2 2h15a2 2 0 0 0 2-2v-4" fill="none" stroke="#a9adb3" stroke-width="2"/><path d="M5 8h6M5 12h5M5 16h7" stroke="#a9adb3" stroke-width="2"/><circle cx="17" cy="10" r="5" fill="#a9adb3"/><path d="M17 7.5v5M14.5 10h5" stroke="#252930" stroke-width="1.6"/></svg>
<svg class="ico" style="left:1819.5px;top:1356.5px" width="17" height="17" viewBox="0 0 17 17"><path d="M8.5 0v17M0 8.5h17" stroke="#a9adb3" stroke-width="2"/></svg>
<div class="a" style="left:521px;top:553.4000000000001px;width:315px;height:48px;border:1.5px solid #555a62"></div>
<svg class="ico" style="left:800px;top:566.4000000000001px" width="23" height="24" viewBox="0 0 23 24"><path d="M5 16H3.5A2 2 0 0 1 1.5 14V3.5A2 2 0 0 1 3.5 1.5H13A2 2 0 0 1 15 3.5V5.5" fill="none" stroke="#9ea2a8" stroke-width="1.9"/><path d="M5.5 12V8A2 2 0 0 1 7.5 6H19.5A2 2 0 0 1 21.5 8V20.5A2 2 0 0 1 19.5 22.5H7.5A2 2 0 0 1 5.5 20.5V19.5" fill="none" stroke="#9ea2a8" stroke-width="1.9"/><path d="M3 16h9.5M10 13.3l2.8 2.7-2.8 2.7" fill="none" stroke="#9ea2a8" stroke-width="1.8"/></svg>
</div></body></html>
